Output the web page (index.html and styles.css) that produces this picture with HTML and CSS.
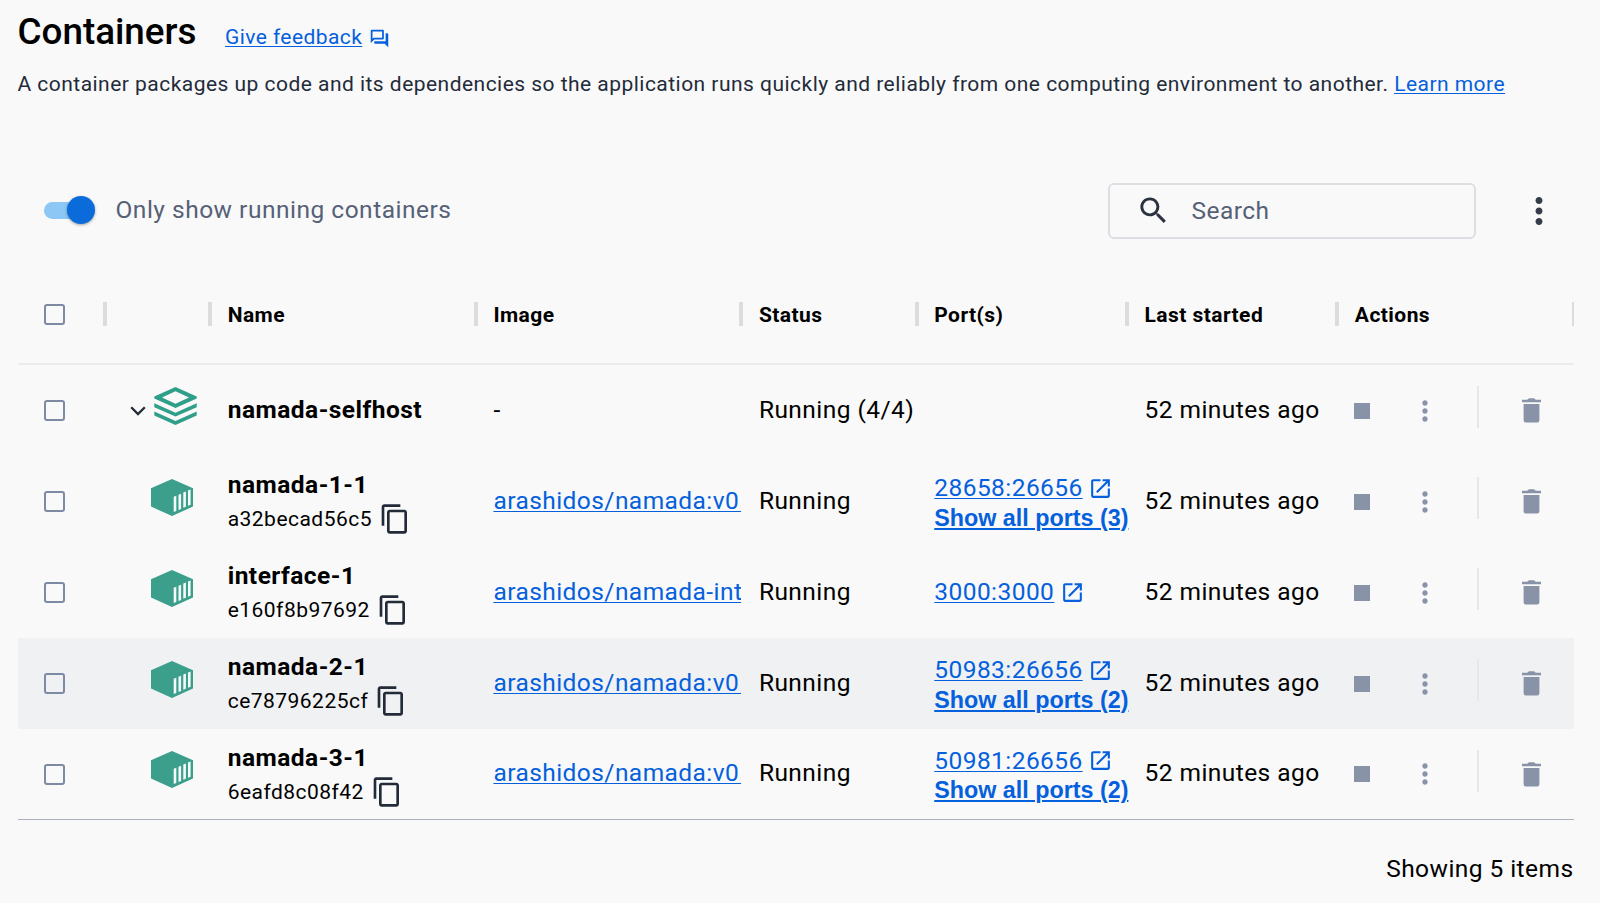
FILE: index.html
```html
<!DOCTYPE html>
<html lang="en">
<head>
<meta charset="utf-8">
<title>Containers</title>
<link rel="stylesheet" href="styles.css">
</head>
<body>
<svg class="defs" aria-hidden="true">
  <symbol id="chat" viewBox="0 0 24 24"><path d="M15 4v7H5.17L4 12.17V4h11m1-2H3c-.55 0-1 .45-1 1v14l4-4h10c.55 0 1-.45 1-1V3c0-.55-.45-1-1-1zm5 4h-2v9H6v2c0 .55.45 1 1 1h11l4 4V7c0-.55-.45-1-1-1z"/></symbol>
  <symbol id="search" viewBox="0 0 24 24"><path d="M15.5 14h-.79l-.28-.27C15.41 12.59 16 11.11 16 9.5 16 5.91 13.09 3 9.5 3S3 5.91 3 9.5 5.91 16 9.5 16c1.61 0 3.09-.59 4.23-1.57l.27.28v.79l5 4.99L20.49 19l-4.99-5zm-6 0C7.01 14 5 11.99 5 9.5S7.01 5 9.5 5 14 7.01 14 9.5 11.99 14 9.5 14z"/></symbol>
  <symbol id="more" viewBox="0 0 24 24"><path d="M12 8c1.1 0 2-.9 2-2s-.9-2-2-2-2 .9-2 2 .9 2 2 2zm0 2c-1.1 0-2 .9-2 2s.9 2 2 2 2-.9 2-2-.9-2-2-2zm0 6c-1.1 0-2 .9-2 2s.9 2 2 2 2-.9 2-2-.9-2-2-2z"/></symbol>
  <symbol id="chevron" viewBox="0 0 16 10"><path d="M1.2 1.2 8 8l6.800-6.800" fill="none" stroke="currentColor" stroke-width="2.300"/></symbol>
  <symbol id="stack" viewBox="0 0 43 38"><path fill-rule="evenodd" d="M21.500 0 42.700 9.500v2L21.500 21 .3 11.500v-2zM21.500 4.300 8 10.500l13.500 6.200L35 10.500z"/><path d="M.3 16.300 21.500 25.800l21.200-9.500v4L21.500 29.600.3 20.300zM.3 24.500 21.500 34l21.200-9.500v4L21.500 38 .3 28.500z"/></symbol>
  <symbol id="box" viewBox="0 0 42 37"><path d="M21 0 42 9.300v18.300L21 37 0 27.600V9.300z"/><path class="slats" d="M22.700 17.700l2.600-1v15.200l-2.600 1zM27.500 15.700l2.600-1v15.200l-2.600 1zM32.300 13.600l2.600-1v15.200l-2.600 1zM37 11.500l2.600-1v15.200l-2.600 1z"/></symbol>
  <symbol id="copy" viewBox="0 0 24 24"><path d="M16 1H4c-1.100 0-2 .9-2 2v14h2V3h12V1zm3 4H8c-1.100 0-2 .9-2 2v14c0 1.100.9 2 2 2h11c1.100 0 2-.9 2-2V7c0-1.100-.9-2-2-2zm0 16H8V7h11v14z"/></symbol>
  <symbol id="open" viewBox="0 0 24 24"><path d="M19 19H5V5h7V3H5c-1.110 0-2 .9-2 2v14c0 1.100.89 2 2 2h14c1.100 0 2-.9 2-2v-7h-2v7zM14 3v2h3.590l-9.830 9.830 1.410 1.410L19 6.410V10h2V3h-7z"/></symbol>
  <symbol id="trash" viewBox="0 0 19 25"><path d="M0 1.700h5.200L7 .3h5l1.800 1.400H19v2.500H0zM1.600 6h15.800v16.200a2.200 2.200 0 0 1-2.200 2.200H3.800a2.200 2.200 0 0 1-2.200-2.200z"/></symbol>
</svg>

<main class="page">
  <header class="heading">
    <h1>Containers</h1>
    <a class="feedback">Give feedback</a>
    <svg class="chat"><use href="#chat"/></svg>
  </header>
  <p class="intro">A container packages up code and its dependencies so the application runs quickly and reliably from one computing environment to another. <a>Learn more</a></p>

  <section class="toolbar">
    <span class="switch"><span class="thumb"></span></span>
    <span class="switch-label">Only show running containers</span>
    <div class="search"><svg><use href="#search"/></svg><span>Search</span></div>
    <svg class="menu"><use href="#more"/></svg>
  </section>

  <section class="table">
    <div class="row head">
      <div class="cell"><i class="check"></i></div>
      <div class="cell"></div>
      <div class="cell">Name</div>
      <div class="cell">Image</div>
      <div class="cell">Status</div>
      <div class="cell">Port(s)</div>
      <div class="cell">Last started</div>
      <div class="cell last">Actions</div>
    </div>

    <div class="row">
      <div class="cell"><i class="check"></i></div>
      <div class="cell group"><svg class="chevron"><use href="#chevron"/></svg><svg class="stack"><use href="#stack"/></svg></div>
      <div class="cell text"><b>namada-selfhost</b></div>
      <div class="cell text">-</div>
      <div class="cell text">Running (4/4)</div>
      <div class="cell"></div>
      <div class="cell text">52 minutes ago</div>
      <div class="cell actions"><i class="stop"></i><svg class="dots"><use href="#more"/></svg><i class="rule"></i><svg class="trash"><use href="#trash"/></svg></div>
    </div>

    <div class="row">
      <div class="cell"><i class="check"></i></div>
      <div class="cell"><svg class="box"><use href="#box"/></svg></div>
      <div class="cell name"><b>namada-1-1</b><div class="id">a32becad56c5<svg><use href="#copy"/></svg></div></div>
      <div class="cell text image"><a>arashidos/namada:v0.</a></div>
      <div class="cell text">Running</div>
      <div class="cell ports"><div class="port"><a>28658:26656</a><svg><use href="#open"/></svg></div><a class="all">Show all ports (3)</a></div>
      <div class="cell text">52 minutes ago</div>
      <div class="cell actions"><i class="stop"></i><svg class="dots"><use href="#more"/></svg><i class="rule"></i><svg class="trash"><use href="#trash"/></svg></div>
    </div>

    <div class="row">
      <div class="cell"><i class="check"></i></div>
      <div class="cell"><svg class="box"><use href="#box"/></svg></div>
      <div class="cell name"><b>interface-1</b><div class="id">e160f8b97692<svg><use href="#copy"/></svg></div></div>
      <div class="cell text image"><a>arashidos/namada-int</a></div>
      <div class="cell text">Running</div>
      <div class="cell ports single"><div class="port"><a>3000:3000</a><svg><use href="#open"/></svg></div></div>
      <div class="cell text">52 minutes ago</div>
      <div class="cell actions"><i class="stop"></i><svg class="dots"><use href="#more"/></svg><i class="rule"></i><svg class="trash"><use href="#trash"/></svg></div>
    </div>

    <div class="row hover">
      <div class="cell"><i class="check"></i></div>
      <div class="cell"><svg class="box"><use href="#box"/></svg></div>
      <div class="cell name"><b>namada-2-1</b><div class="id">ce78796225cf<svg><use href="#copy"/></svg></div></div>
      <div class="cell text image"><a>arashidos/namada:v0.</a></div>
      <div class="cell text">Running</div>
      <div class="cell ports"><div class="port"><a>50983:26656</a><svg><use href="#open"/></svg></div><a class="all">Show all ports (2)</a></div>
      <div class="cell text">52 minutes ago</div>
      <div class="cell actions"><i class="stop"></i><svg class="dots"><use href="#more"/></svg><i class="rule"></i><svg class="trash"><use href="#trash"/></svg></div>
    </div>

    <div class="row final">
      <div class="cell"><i class="check"></i></div>
      <div class="cell"><svg class="box"><use href="#box"/></svg></div>
      <div class="cell name"><b>namada-3-1</b><div class="id">6eafd8c08f42<svg><use href="#copy"/></svg></div></div>
      <div class="cell text image"><a>arashidos/namada:v0.</a></div>
      <div class="cell text">Running</div>
      <div class="cell ports"><div class="port"><a>50981:26656</a><svg><use href="#open"/></svg></div><a class="all">Show all ports (2)</a></div>
      <div class="cell text">52 minutes ago</div>
      <div class="cell actions"><i class="stop"></i><svg class="dots"><use href="#more"/></svg><i class="rule"></i><svg class="trash"><use href="#trash"/></svg></div>
    </div>
  </section>

  <footer>Showing 5 items</footer>
</main>
</body>
</html>
```
FILE: styles.css
```css
* { box-sizing: border-box; }

body {
  margin: 0;
  background: #f9f9f9;
  color: #000;
  font: 24.5px/28px Roboto, sans-serif;
  letter-spacing: 0.44px;
  overflow: hidden;
}

svg { display: block; flex: none; fill: currentColor; }
.defs { position: absolute; width: 0; height: 0; }

a {
  color: #0560dd;
  text-decoration: underline;
  text-decoration-thickness: 1px;
  text-underline-offset: 2px;
  text-decoration-skip-ink: none;
}

.page { height: 903px; padding: 10px 26.500px 0 17.500px; }

.heading { display: flex; align-items: baseline; height: 54px; }
h1 {
  width: 207.500px;
  margin: 0;
  font-size: 36.800px;
  line-height: 44px;
  font-weight: 500;
  letter-spacing: 0;
}
.feedback { font-size: 21px; letter-spacing: 0.42px; }
.chat { width: 21px; height: 21px; margin-left: 6.500px; align-self: flex-start; margin-top: 18px; color: #0560dd; }

.intro {
  margin: 6px 0 0;
  font-size: 21px;
  line-height: 28px;
  letter-spacing: 0.468px;
  color: #232b39;
  white-space: nowrap;
}

.toolbar { display: flex; align-items: center; height: 56px; margin-top: 84.500px; padding-left: 26.500px; }
.switch { width: 46.500px; height: 17.500px; border-radius: 9px; background: #8cc7f5; }
.thumb {
  display: block;
  width: 28px;
  height: 28px;
  margin: -5.500px 0 0 22.500px;
  border-radius: 50%;
  background: #0b6bda;
  box-shadow: 0 1px 3px rgba(0, 0, 0, .35);
}
.switch-label { margin-left: 25px; padding-bottom: 1px; color: #566178; letter-spacing: 0.5px; }
.search {
  display: flex;
  align-items: center;
  width: 367.500px;
  height: 56px;
  margin-left: auto;
  padding-left: 25.500px;
  border: 2px solid #dcdee3;
  border-radius: 6px;
  color: #566178;
}
.search svg { width: 35px; height: 35px; margin-right: 21px; color: #2a3240; }
.menu { width: 42px; height: 42px; margin: 0 14px 0 42px; color: #353d4b; }

.table { margin-top: 27.600px; border-bottom: 1px solid #a9b0bc; }
.row {
  display: grid;
  grid-template-columns: 87.500px 105px 265.700px 265.500px 175.400px 210.300px 210.300px 1fr;
  height: 91px;
}
.row.hover { background: #f0f1f3; }
.row.final { height: 90px; }
.cell { display: flex; align-items: center; min-width: 0; padding-left: 17.700px; white-space: nowrap; }
.cell:first-child { padding-left: 26.500px; }
.cell.text { padding-bottom: 2px; }
b { font-weight: 700; letter-spacing: 0.48px; }

.head { height: 99px; border-bottom: 2px solid #ececee; font-size: 21px; font-weight: 700; }
.head .cell { position: relative; }
.head .cell::after {
  content: "";
  position: absolute;
  right: -2px;
  top: 36px;
  width: 4px;
  height: 24px;
  background: #dcdcdd;
}
.head .last::after { right: 0; width: 2px; }

.check { width: 21px; height: 21px; border: 2px solid #7d8aa3; border-radius: 3px; }
.group.cell { padding-left: 25px; }
.chevron { width: 16px; height: 10px; color: #232b39; }
.stack { width: 43px; height: 38px; margin: -9px 0 0 7.500px; color: #2f9f8a; }
.cell .box { width: 42px; height: 37px; margin: -9px 0 0 28px; color: #3b9f8c; }
.slats { fill: #f4fbfa; }

.name.cell { flex-direction: column; align-items: flex-start; justify-content: flex-start; padding-top: 15px; }
.id { display: flex; align-items: center; height: 32px; margin-top: 4px; font-size: 21px; letter-spacing: 0.47px; }
.id svg { width: 32px; height: 32px; margin: 0 0 0 7px; color: #232b39; }
.cell.image { overflow: hidden; margin-right: .5px; }

.ports.cell { flex-direction: column; align-items: flex-start; justify-content: center; padding-top: 3px; }
.ports.single.cell { padding-top: 0; padding-bottom: 1px; }
.port { display: flex; align-items: center; height: 29px; }
.port svg { width: 25px; height: 25px; margin-left: 5.500px; color: #0560dd; }
.all {
  font: 700 23.300px/30px "Liberation Sans", sans-serif;
  letter-spacing: 0;
  text-decoration-thickness: 2px;
  text-decoration-skip-ink: auto;
}

.stop { width: 16px; height: 16px; background: #8993a7; }
.cell.actions { padding-left: 16.500px; color: #8993a7; }
.dots { width: 32px; height: 32px; margin-left: 39.200px; }
.rule { width: 1.500px; height: 42px; margin: -7px 0 0 36.600px; background: #e6e7ea; }
.trash { width: 19px; height: 25px; margin-left: 43px; }

footer { margin-top: 35px; text-align: right; }
```
